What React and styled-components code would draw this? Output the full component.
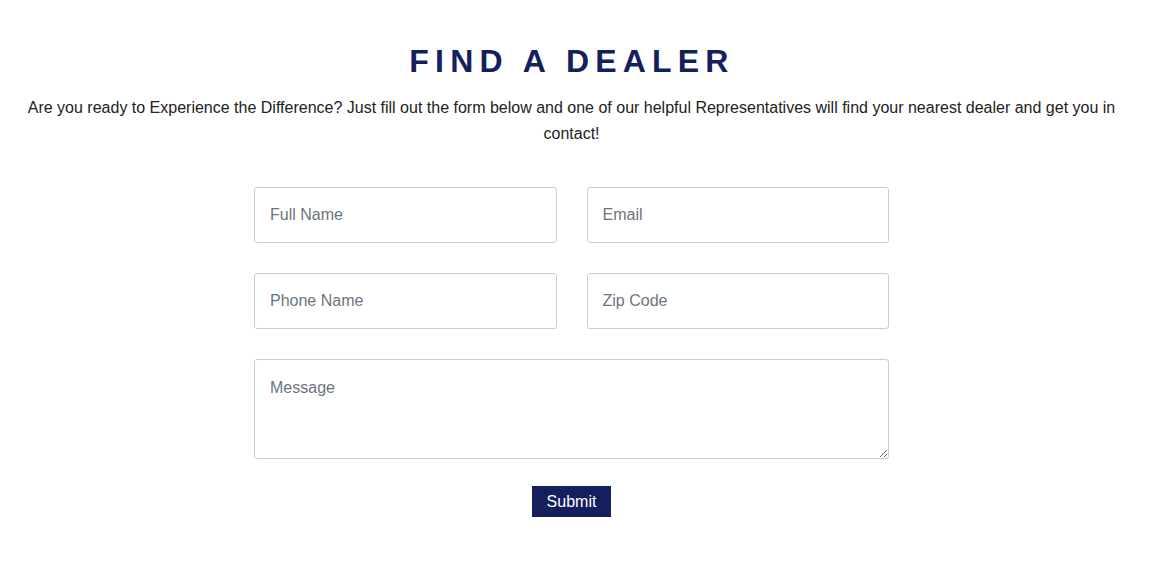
import { createGlobalStyle, styled } from "styled-components";

const GlobalStyle = createGlobalStyle`
  body {
    margin: 0;
    background: #ffffff;
    font-family: "Liberation Sans", Arial, sans-serif;
  }
  * {
    box-sizing: border-box;
  }
`;

const Page = styled.section`
  width: 1143px;
  padding: 41px 0 60px;
  text-align: center;
`;

const Title = styled.h1`
  margin: 0 0 13px;
  font-family: "Liberation Sans", Arial, sans-serif;
  font-size: 32px;
  line-height: 41px;
  font-weight: 700;
  letter-spacing: 6.2px;
  padding-left: 1px;
  color: #14205e;
`;

const Intro = styled.p`
  margin: 0 auto;
  font-size: 16px;
  line-height: 26px;
  color: #222222;
  max-width: 1100px;
`;

const Form = styled.form`
  width: 635px;
  margin: 40px auto 0;
  display: grid;
  grid-template-columns: 1fr 1fr;
  column-gap: 30px;
  row-gap: 30px;
`;

const fieldBase = `
  width: 100%;
  border: 1px solid #cccccc;
  border-radius: 3px;
  padding: 0 15px;
  font-family: "Liberation Sans", Arial, sans-serif;
  font-size: 16px;
  color: #333333;
  background: #ffffff;
  outline: none;
  &::placeholder {
    color: #6c757d;
  }
`;

const Field = styled.input`
  ${fieldBase}
  height: 56px;
`;

const MessageBox = styled.textarea`
  ${fieldBase}
  grid-column: 1 / -1;
  height: 100px;
  padding-top: 19px;
  resize: vertical;
`;

const Actions = styled.div`
  grid-column: 1 / -1;
  display: flex;
  justify-content: center;
  margin-top: -3px;
`;

const SubmitButton = styled.button`
  height: 31px;
  width: 79px;
  border: none;
  border-radius: 0;
  background-color: #14205e;
  color: #ffffff;
  font-family: "Liberation Sans", Arial, sans-serif;
  font-size: 16px;
  cursor: pointer;
`;

const App = () => {
  return (
    <>
      <GlobalStyle />
      <Page>
        <Title>FIND A DEALER</Title>
        <Intro>
          Are you ready to Experience the Difference? Just fill out the form below and one of our helpful
          Representatives will find your nearest dealer and get you in contact!
        </Intro>
        <Form onSubmit={(e) => e.preventDefault()}>
          <Field type="text" placeholder="Full Name" />
          <Field type="email" placeholder="Email" />
          <Field type="tel" placeholder="Phone Name" />
          <Field type="text" placeholder="Zip Code" />
          <MessageBox placeholder="Message" />
          <Actions>
            <SubmitButton type="submit">Submit</SubmitButton>
          </Actions>
        </Form>
      </Page>
    </>
  );
};

export default App;
